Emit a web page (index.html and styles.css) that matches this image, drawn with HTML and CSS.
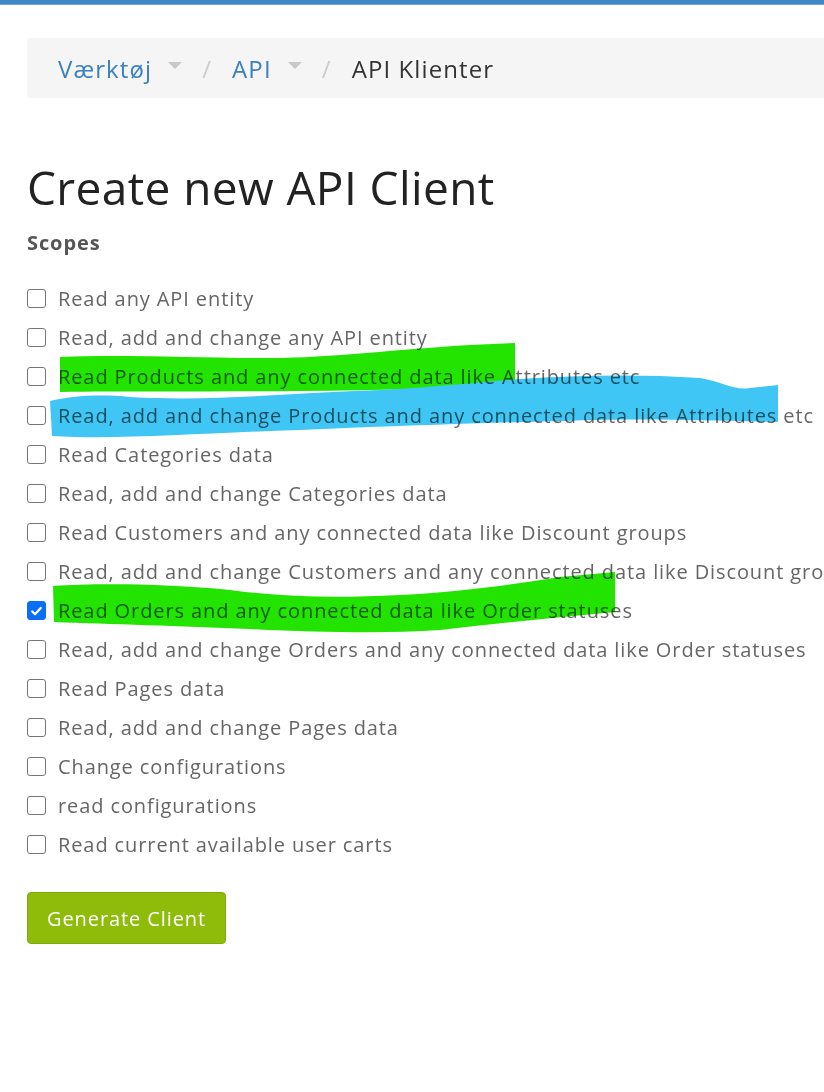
FILE: index.html
```html
<!DOCTYPE html>
<html lang="da">

<head>
  <meta charset="UTF-8">
  <meta name="viewport" content="width=device-width, initial-scale=1.0">
  <title>API Klienter</title>
  <link rel="stylesheet" href="styles.css">
</head>

<body>
  <div class="topbar"></div>
  <div class="page">
    <div class="crumbs">
      <a href="#">Værktøj</a><span class="caret"></span>
      <span class="sep">/</span>
      <a href="#">API</a><span class="caret"></span>
      <span class="sep">/</span>
      <span class="current">API Klienter</span>
    </div>

    <h1>Create new API Client</h1>
    <p class="label">Scopes</p>

    <ul class="scopes">
      <li><span class="box"></span>Read any API entity</li>
      <li><span class="box"></span>Read, add and change any API entity</li>
      <li><span class="box"></span>Read Products and any connected data like Attributes etc</li>
      <li><span class="box"></span>Read, add and change Products and any connected data like Attributes etc</li>
      <li><span class="box"></span>Read Categories data</li>
      <li><span class="box"></span>Read, add and change Categories data</li>
      <li><span class="box"></span>Read Customers and any connected data like Discount groups</li>
      <li><span class="box"></span>Read, add and change Customers and any connected data like Discount groups</li>
      <li><span class="box checked"><svg viewBox="0 0 20 20" width="20" height="20"><path d="M5 10.5l3.3 3.3L15 6.5" fill="none" stroke="#fff" stroke-width="2.6" stroke-linecap="round" stroke-linejoin="round"/></svg></span>Read Orders and any connected data like Order statuses</li>
      <li><span class="box"></span>Read, add and change Orders and any connected data like Order statuses</li>
      <li><span class="box"></span>Read Pages data</li>
      <li><span class="box"></span>Read, add and change Pages data</li>
      <li><span class="box"></span>Change configurations</li>
      <li><span class="box"></span>read configurations</li>
      <li><span class="box"></span>Read current available user carts</li>
    </ul>

    <button class="btn-generate">Generate Client</button>
  </div>

  <!-- highlighter marks drawn over the screenshot -->
  <svg class="marks" width="824" height="1092" viewBox="0 0 824 1092">
    <path fill="#22e400" d="M60 357 C120 354 200 358 270 358 C330 358 400 349 470 345 L515 343 L515 386 C450 388 380 390 300 391 C200 392 120 391 60 392 Z" />
    <path fill="#40c6f4" d="M50 401 C70 396 100 394 130 397 C220 402 300 392 380 390 C450 386 490 381 520 379 C580 375 640 374 700 378 C720 381 735 391 750 388 L778 385 L778 422 C700 420 640 418 560 421 C480 423 400 426 300 430 C200 433 120 440 52 436 Z" />
    <path fill="#22e400" d="M53 586 C100 583 170 584 230 590 C290 598 340 598 400 595 C460 592 510 585 560 577 L615 572 L615 612 C560 617 500 623 440 630 C380 634 320 632 250 629 C180 626 110 624 54 622 Z" />
  </svg>
</body>

</html>
```

FILE: styles.css
```css
* {
  margin: 0;
  padding: 0;
  box-sizing: border-box;
}

body {
  position: relative;
  overflow: hidden;
  width: 824px;
  height: 1092px;
  font-family: "Open Sans", "Liberation Sans", sans-serif;
  color: #666;
  background: #fff;
}

ul {
  list-style: none;
}

a {
  text-decoration: none;
}

.topbar {
  height: 5px;
  background-color: #3d87c6;
  border-bottom: 1px solid #6aa6d8;
}

.page {
  width: 1000px;
  padding-left: 27px;
}

.crumbs {
  display: flex;
  align-items: center;
  height: 60px;
  margin-top: 33px;
  padding-left: 31px;
  font-size: 24px;
  letter-spacing: 1.1px;
  background-color: #f5f5f5;
  border-radius: 4px;
}

.crumbs a {
  color: #3b80c0;
}

.crumbs .caret {
  width: 0;
  height: 0;
  margin: 0 0 6px 16px;
  border-left: 7px solid transparent;
  border-right: 7px solid transparent;
  border-top: 7px solid #c9c9c9;
}

.crumbs .sep {
  margin: 0 20px 0 20px;
  color: #ccc;
}

.crumbs .current {
  color: #333;
}

h1 {
  margin-top: 59px;
  font-size: 46px;
  font-weight: 400;
  line-height: 60px;
  letter-spacing: 0.4px;
  color: #222;
}

.label {
  margin-top: 12px;
  font-size: 20px;
  font-weight: 700;
  line-height: 28px;
  letter-spacing: 0.9px;
  color: #555;
}

.scopes {
  margin-top: 22px;
}

.scopes li {
  display: flex;
  align-items: center;
  height: 39px;
  font-size: 20px;
  letter-spacing: 0.9px;
  white-space: nowrap;
}

.box {
  display: inline-flex;
  flex-shrink: 0;
  align-items: center;
  justify-content: center;
  width: 19px;
  height: 19px;
  margin-right: 12px;
  border: 1.5px solid #767676;
  border-radius: 3px;
  background: #fff;
}

.box.checked {
  border-color: #0b6ff5;
  background-color: #0b6ff5;
}

.btn-generate {
  margin-top: 28px;
  width: 199px;
  height: 52px;
  font-family: inherit;
  font-size: 20px;
  letter-spacing: 0.9px;
  color: #fff;
  background-color: #8fbb0a;
  border: 1px solid #7fa80a;
  border-radius: 4px;
}

.marks {
  position: absolute;
  top: 0;
  left: 0;
  pointer-events: none;
  mix-blend-mode: multiply;
}
```
